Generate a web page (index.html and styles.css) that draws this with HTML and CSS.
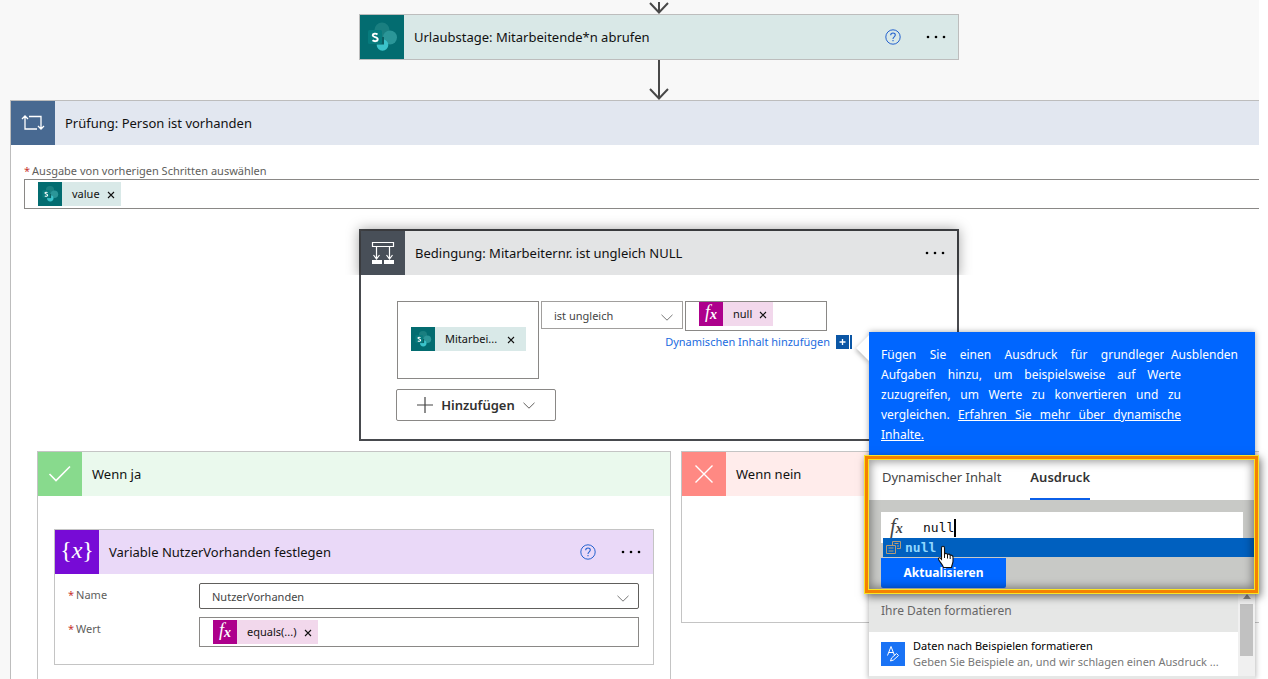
FILE: index.html
```html
<!DOCTYPE html>
<html lang="de">
<head>
<meta charset="utf-8">
<title>Flow-Designer</title>
<link rel="stylesheet" href="styles.css">
</head>
<body>
<svg class="defs" aria-hidden="true">
  <symbol id="sharepoint" viewBox="0 0 44 44">
    <circle cx="22" cy="15" r="7.500" fill="#1a7f80"/>
    <circle cx="30" cy="22.500" r="7" fill="#2b9698"/>
    <circle cx="22.500" cy="30" r="5.800" fill="#3bc3ca"/>
    <path d="M24 22v7.500h-7.500V22z" fill="#0b5f62"/>
    <rect x="8" y="15" width="14" height="14" rx="1.500" fill="#077b7d"/>
    <path d="M17.500 19.500c-1.500-1.200-4.800-1.200-4.800.8 0 2.300 5 1.400 5 4 0 2.300-3.500 2.300-5.200 1" fill="none" stroke="#fff" stroke-width="1.900"/>
  </symbol>
  <symbol id="chevron" viewBox="0 0 12 7"><path d="M.5.8 6 6.200 11.500.8" fill="none" stroke="currentColor"/></symbol>
  <symbol id="close" viewBox="0 0 8 8"><path d="M1 1l6 6M7 1 1 7" stroke="currentColor" stroke-width="1.100"/></symbol>
  <symbol id="help" viewBox="0 0 16 16"><circle cx="8" cy="8" r="7.200" fill="none" stroke="currentColor"/><path d="M5.700 6.300c0-3 4.600-3 4.600-.2 0 1.800-2.300 1.700-2.300 3.900M8 11v1.300" fill="none" stroke="currentColor" stroke-width="1.100"/></symbol>
  <symbol id="dots" viewBox="0 0 22 4"><circle cx="3" cy="2" r="1.300"/><circle cx="11" cy="2" r="1.300"/><circle cx="19" cy="2" r="1.300"/></symbol>
  <symbol id="arrowhead" viewBox="0 0 20 12"><path d="M10 0v10M1 1l9 9.500L19 1" fill="none" stroke="#484848" stroke-width="2"/></symbol>
</svg>

<main class="canvas">
  <div class="flow">
    <div class="connector connector-top"><svg><use href="#arrowhead"/></svg></div>

    <section class="card">
      <header class="head head-teal">
        <span class="tile tile-teal"><svg class="full"><use href="#sharepoint"/></svg></span>
        <h2>Urlaubstage: Mitarbeitende*n abrufen</h2>
        <button class="icon-btn help" aria-label="Hilfe"><svg><use href="#help"/></svg></button>
        <button class="icon-btn more" aria-label="Menü"><svg><use href="#dots"/></svg></button>
      </header>
    </section>

    <div class="connector"><span class="stem"></span><svg><use href="#arrowhead"/></svg></div>

    <section class="scope">
      <header class="head head-blue">
        <span class="tile tile-blue">
          <svg width="24" height="16" viewBox="0 0 24 16" fill="none" stroke="#fff" stroke-width="1.300"><path d="M4 1v13h12M1 4l3-3 3 3M8 1.500h12V14M17 11l3 3 3-3"/></svg>
        </span>
        <h2>Prüfung: Person ist vorhanden</h2>
      </header>
      <div class="scope-field">
        <span class="label"><span class="req">*</span>Ausgabe von vorherigen Schritten auswählen</span>
        <div class="box">
          <span class="chip chip-teal"><span class="chip-icon"><svg class="full"><use href="#sharepoint"/></svg></span><span>value</span><button aria-label="value entfernen"><svg><use href="#close"/></svg></button></span>
        </div>
      </div>

      <section class="card condition">
        <header class="head head-gray">
          <span class="tile tile-dark">
            <svg width="24" height="24" viewBox="0 0 24 24" fill="none" stroke="#fff"><path d="M1.500 1.500h21v4h-21zM5.500 6v12M18.500 6v12M2.500 14l3 4 3-4M15.500 14l3 4 3-4" stroke-width="1.200"/><path d="M1 19h10v4H1zM13 19h10v4H13z" fill="#fff" stroke="none"/></svg>
          </span>
          <h2>Bedingung: Mitarbeiternr. ist ungleich NULL</h2>
          <button class="icon-btn more" aria-label="Menü"><svg><use href="#dots"/></svg></button>
        </header>
        <div class="condition-body">
          <div class="operands">
            <div class="box operand-left">
              <span class="chip chip-teal"><span class="chip-icon"><svg class="full"><use href="#sharepoint"/></svg></span><span>Mitarbei...</span><button aria-label="Mitarbeiternr. entfernen"><svg><use href="#close"/></svg></button></span>
            </div>
            <div class="select select-light">
              <select aria-label="Operator"><option>ist ungleich</option></select>
              <svg><use href="#chevron"/></svg>
            </div>
            <div class="box box-tight">
              <span class="chip chip-pink"><span class="chip-icon fx">f<small>x</small></span><span>null</span><button aria-label="null entfernen"><svg><use href="#close"/></svg></button></span>
            </div>
            <a class="dynamic" href="#inhalt">Dynamischen Inhalt hinzufügen
              <svg width="17" height="14" viewBox="0 0 17 14"><path d="M0 0h13v14H0zM14 0h2v14h-2z" fill="#0b56a5"/><path d="M6.500 4v6M3.500 7h6" stroke="#fff" stroke-width="1.300"/></svg>
            </a>
          </div>
          <button class="add">
            <svg width="16" height="16" viewBox="0 0 16 16"><path d="M8 0v16M0 8h16" stroke="#444" stroke-width="1.200"/></svg>
            Hinzufügen
            <svg class="chev"><use href="#chevron"/></svg>
          </button>
        </div>
      </section>

      <div class="branches">
        <section class="branch branch-yes">
          <header class="head head-green">
            <span class="tile tile-green"><svg width="24" height="18" viewBox="0 0 24 18"><path d="M1.500 9 8 15.500 22 1.500" fill="none" stroke="#fff" stroke-width="1.600"/></svg></span>
            <h2>Wenn ja</h2>
          </header>
          <section class="card variable">
            <header class="head head-purple">
              <span class="tile tile-purple">{<i>x</i>}</span>
              <h2>Variable NutzerVorhanden festlegen</h2>
              <button class="icon-btn help" aria-label="Hilfe"><svg><use href="#help"/></svg></button>
              <button class="icon-btn more" aria-label="Menü"><svg><use href="#dots"/></svg></button>
            </header>
            <div class="params">
              <label class="label" for="name"><span class="req">*</span>Name</label>
              <div class="select">
                <select id="name"><option>NutzerVorhanden</option></select>
                <svg><use href="#chevron"/></svg>
              </div>
              <span class="label"><span class="req">*</span>Wert</span>
              <div class="box">
                <span class="chip chip-pink"><span class="chip-icon fx">f<small>x</small></span><span>equals(...)</span><button aria-label="equals entfernen"><svg><use href="#close"/></svg></button></span>
              </div>
            </div>
          </section>
        </section>
        <section class="branch branch-no">
          <header class="head head-red">
            <span class="tile tile-red"><svg width="18" height="18" viewBox="0 0 18 18"><path d="M.5.5l17 17M17.500.5l-17 17" stroke="#fff" stroke-width="1.400"/></svg></span>
            <h2>Wenn nein</h2>
          </header>
        </section>
      </div>
    </section>
  </div>
</main>

<aside class="panel" id="inhalt">
  <svg class="pointer" width="13" height="26" viewBox="0 0 13 26"><path d="M13 0 0 13l13 13z" fill="#fff"/></svg>
  <div class="intro">
    <p>Fügen Sie einen Ausdruck für grundlegende Aufgaben hinzu, um beispielsweise auf Werte zuzugreifen, um Werte zu konvertieren und zu vergleichen. <a href="#mehr">Erfahren Sie mehr über dynamische Inhalte.</a></p>
    <button class="hide">Ausblenden</button>
  </div>
  <div class="editor">
    <nav class="tabs">
      <button>Dynamischer Inhalt</button>
      <button class="active">Ausdruck</button>
    </nav>
    <div class="expression">
      <label class="formula">
        <span class="fx fx-dark">f<small>x</small></span>
        <input value="null" aria-label="Ausdruck"><span class="caret"></span>
      </label>
      <button class="update">Aktualisieren</button>
      <div class="suggestion">
        <svg width="15" height="13" viewBox="0 0 15 13" fill="none" stroke="#b39a78"><path d="M6.500 4V.5h8v7H11M.5 4.500h9v8h-9zM2.500 7h5M2.500 10h5M8.500 2.500h4M11 5h2"/></svg>
        <span>null</span>
      </div>
      <svg class="cursor" width="18" height="24" viewBox="0 0 18 24"><path d="M4.500 3c0-2.300 3-2.300 3 0v6c1-1 2.500-.7 3 .5 1-.8 2.300-.4 2.700.8 1.300-.5 2.800.2 2.800 2v4c0 2-1 3-1.500 6.200H6.500c-.5-2.500-3.500-5.200-4.800-7.700-.9-1.800.8-2.600 2-1.500l.8.900z" fill="#fff" stroke="#111" stroke-width="1.100"/><path d="M7.500 9v4M10.500 9.500V13.500M13.200 10.500V14" stroke="#111"/></svg>
    </div>
  </div>
  <div class="results">
    <div class="list">
      <h3>Ihre Daten formatieren</h3>
      <div class="item">
        <svg width="24" height="24" viewBox="0 0 24 24" fill="none" stroke="#fff"><path d="M0 0h24v24H0z" fill="#1a73f5" stroke="none"/><path d="M6.500 13.500l3.500-9 3.500 9M7.800 10.500h4.500M9.500 19l1-3 5-4.500 2 2-5 4.500z"/></svg>
        <div><strong>Daten nach Beispielen formatieren</strong><span>Geben Sie Beispiele an, und wir schlagen einen Ausdruck ...</span></div>
      </div>
    </div>
    <div class="scroll"><svg width="8" height="5" viewBox="0 0 8 5"><path d="M0 5l4-5 4 5z" fill="#8a8a8a"/></svg><span></span></div>
  </div>
</aside>
</body>
</html>
```
FILE: styles.css
```css
* { box-sizing: border-box; }
body {
  margin: 0;
  height: 100vh;
  overflow: hidden;
  position: relative;
  background: #fff;
  color: #111;
  font: 12px/16px "Noto Sans", "Open Sans", sans-serif;
}
button, select, input { font: inherit; color: inherit; }
button { border: 0; padding: 0; background: none; cursor: pointer; }
h2, h3, p { margin: 0; font-weight: 400; }
svg { flex: none; }
.defs { position: absolute; width: 0; height: 0; }
.full { width: 100%; height: 100%; }

.canvas { height: 100%; margin-right: 9px; overflow: hidden; background: #f8f8f8; }
.flow { margin-left: 10px; width: calc(100% + 39px); font-size: 11px; }

.connector { display: flex; flex-direction: column; align-items: center; }
.connector svg { width: 20px; height: 12px; }
.connector-top { padding-top: 2px; }
.stem { width: 2px; height: 28px; background: #484848; }

.card { width: 600px; margin: 0 auto; border: 1px solid #bdbdbd; background: #fff; }
.head { display: flex; align-items: center; height: 44px; }
.head h2 { flex: 1; padding-left: 10px; font-size: 13px; line-height: 20px; }
.tile { display: flex; align-items: center; justify-content: center; flex: none; width: 44px; height: 44px; }
.head-teal { background: #d9e8e7; }
.tile-teal, .chip-teal .chip-icon { background: #036c70; }
.head-blue { background: #e2e7f0; }
.tile-blue { background: #486991; }
.head-gray { background: #e3e4e5; }
.tile-dark { background: #484f58; }
.head-green { background: #eaf9ed; }
.tile-green { background: #88da8d; }
.head-red { background: #ffeceb; }
.tile-red { background: #ff8983; }
.head-purple { background: #ead9f8; }
.tile-purple { background: #770bd6; color: #fff; font: 24px/40px "Liberation Serif", serif; padding-bottom: 4px; }
.icon-btn svg { display: block; }
.help { color: #2563cf; margin-right: 24px; }
.help svg { width: 16px; height: 16px; }
.more { margin-right: 11px; }
.more svg { width: 22px; height: 4px; }

.scope { border: 1px solid #bdbdbd; background: #fff; min-height: 620px; }
.scope-field { padding: 18px 13px 20px; }
.label { color: #605e5c; }
.scope-field .label { display: block; }
.req { color: #c8362f; margin-right: 2px; }
.box { display: flex; height: 30px; padding: 2px 13px; border: 1px solid #8a8886; background: #fff; }
.box-tight { padding: 0 13px; }

.chip { display: inline-flex; align-items: center; height: 24px; padding-right: 5px; }
.chip-icon { display: flex; width: 24px; height: 24px; margin-right: 10px; }
.chip button { margin-left: 6px; padding: 2px 1px 0; }
.chip button svg { display: block; width: 8px; height: 8px; }
.chip-teal { background: #d9e9e8; }
.chip-pink { background: #f2d8ec; }
.fx { justify-content: center; color: #fff; background: #ad008c; font: italic 18px/20px "Liberation Serif", serif; }
.fx small { font-size: 14px; line-height: 26px; font-weight: 700; }

.condition { border: 2px solid #484a4e; }
.condition .head { box-shadow: 0 0 12px 2px rgba(0, 0, 0, .35); clip-path: inset(-16px -16px 0 -16px); }
.condition-body { padding: 26px 35px 18px; }
.operands { display: grid; grid-template-columns: repeat(3, 142px); column-gap: 2px; grid-template-rows: 30px 48px; padding-left: 1px; }
.operand-left { grid-row: 1 / 3; height: auto; align-items: center; padding-bottom: 5px; }
.operand-left .chip { padding-right: 10px; }
.operand-left .chip button { margin-left: 9px; }
.dynamic { grid-column: 2 / 4; justify-self: end; display: flex; align-items: center; gap: 6px; margin-right: -26px; height: 22px; color: #1b6be0; text-decoration: none; white-space: nowrap; }
.add { display: flex; align-items: center; justify-content: center; gap: 8px; width: 160px; height: 32px; margin-top: 10px; border: 1px solid #8a8886; border-radius: 2px; font-size: 13px; font-weight: 600; color: #323130; }
.chev { width: 12px; height: 7px; color: #605e5c; }

.select { display: grid; align-items: center; height: 26px; color: #444; }
.select > * { grid-area: 1 / 1; }
.select select { appearance: none; width: 100%; height: 100%; padding: 2px 12px 0; border: 1px solid #605e5c; border-radius: 2px; background: #fff; }
.select svg { justify-self: end; width: 12px; height: 7px; margin: 4px 10px 0 0; color: #777; pointer-events: none; }
.select-light { height: 28px; }
.select-light select { border-color: #a19f9d; border-radius: 0; }

.branches { display: grid; grid-template-columns: 634fr 600fr; gap: 10px; padding: 10px 26px 0; align-items: start; }
.branch { border: 1px solid #c4c4c4; background: #fff; }
.branch-yes { min-height: 300px; }
.branch-no { min-height: 172px; }
.variable { width: auto; margin: 33px 16px 0; border-color: #c4c4c4; }
.params { display: grid; grid-template-columns: 131px 1fr; row-gap: 8px; padding: 9px 14px 17px 13px; }
.params .label { padding-top: 4px; }

.panel { position: absolute; top: 332px; right: 13px; bottom: 0; width: 386px; box-shadow: 0 0 6px rgba(0, 0, 0, .35); background: #e6e7e6; }
.pointer { position: absolute; left: -13px; top: 3px; filter: drop-shadow(-1px 2px 2px rgba(0, 0, 0, .25)); }
.intro { display: flex; position: relative; height: 123px; padding: 13px 13px 0 12px; background: #06f; color: #fff; line-height: 20px; }
.intro p { width: 300px; text-align: justify; }
.intro a { color: inherit; }
.hide { position: absolute; top: 13px; right: 13px; padding: 0 4px 0 7px; background: #06f; line-height: 20px; }
.editor { position: relative; height: 139px; margin: 0 -4px 0 -5px; border: 1px solid #f9e526; outline: 3px solid #f58200; outline-offset: -4px; box-shadow: 2px 3px 8px rgba(0, 0, 0, .5); background: #c8c9c6; }
.editor::after { content: ""; position: absolute; inset: 3px; border: 1px solid #f9e526; box-shadow: inset 0 0 9px 2px rgba(0, 0, 0, .38); pointer-events: none; }
.tabs { display: flex; gap: 29px; height: 44px; padding-left: 17px; background: #fff; }
.tabs button { height: 44px; border-bottom: 2px solid transparent; font-size: 13px; color: #444; }
.tabs .active { border-color: #0b5fe8; font-weight: 600; color: #333; }
.expression { position: relative; padding: 12px 15px 0 16px; }
.formula { display: flex; align-items: center; height: 31px; padding-left: 9px; background: #fff; }
.fx-dark { color: #444; background: none; font-size: 21px; width: 33px; line-height: 26px; }
.formula input { width: 4ch; padding: 0; border: 0; outline: 0; background: none; }
.formula input, .suggestion { font: 13px/19px "DejaVu Sans Mono", monospace; }
.caret { width: 2px; height: 18px; background: #000; }
.update { width: 125px; height: 30px; margin-top: 15px; border-radius: 0 0 2px 2px; background: #06f; color: #fff; font-weight: 700; }
.suggestion { position: absolute; left: 18px; right: 3px; top: 38px; display: flex; align-items: center; gap: 4px; height: 19px; padding-left: 3px; background: #0060bf; color: #8fd8ff; font-weight: 700; }
.cursor { position: absolute; left: 72px; top: 45px; }
.results { display: flex; }
.list { flex: 1; min-width: 0; }
.list h3 { height: 38px; padding: 9px 12px; font-size: 12px; color: #666; }
.item { display: flex; align-items: center; gap: 8px; height: 44px; padding-left: 12px; background: #fff; }
.item strong, .item span { display: block; font-size: 11px; line-height: 16px; font-weight: 400; white-space: nowrap; }
.item strong { color: #000; }
.item span { color: #777; }
.scroll { display: flex; flex-direction: column; align-items: center; width: 17px; gap: 5px; background: #f0f0f0; }
.scroll span { width: 13px; height: 52px; background: #c1c1c1; }
```
